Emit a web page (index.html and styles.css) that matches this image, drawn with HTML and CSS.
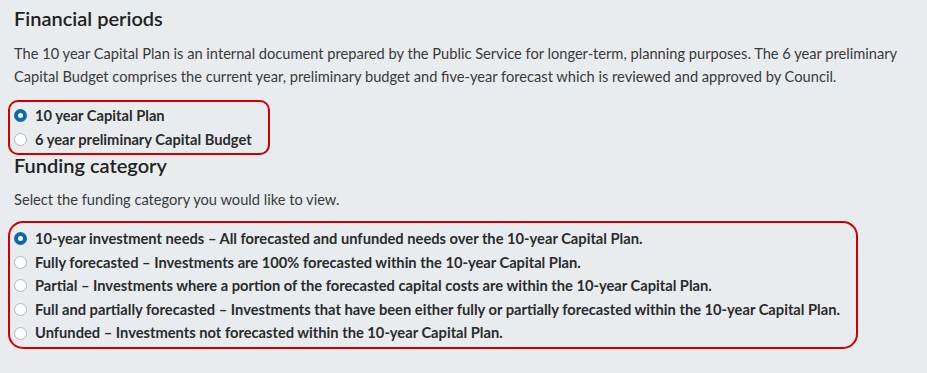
FILE: index.html
```html
<!DOCTYPE html>
<html lang="en">
<head>
<meta charset="utf-8">
<link rel="stylesheet" href="styles.css">
</head>
<body>
<main class="page">
  <section class="group">
    <h2 class="title">Financial periods</h2>
    <p class="desc">The 10 year Capital Plan is an internal document prepared by the Public Service for longer-term, planning purposes. The 6 year preliminary Capital Budget comprises the current year, preliminary budget and five-year forecast which is reviewed and approved by Council.</p>
    <div class="box box-small">
      <label class="opt"><span class="radio checked"></span>10 year Capital Plan</label>
      <label class="opt"><span class="radio"></span>6 year preliminary Capital Budget</label>
    </div>
  </section>
  <section class="group">
    <h2 class="title title-2">Funding category</h2>
    <p class="desc desc-2">Select the funding category you would like to view.</p>
    <div class="box box-large">
      <label class="opt"><span class="radio checked"></span>10-year investment needs – All forecasted and unfunded needs over the 10-year Capital Plan.</label>
      <label class="opt"><span class="radio"></span>Fully forecasted – Investments are 100% forecasted within the 10-year Capital Plan.</label>
      <label class="opt"><span class="radio"></span>Partial – Investments where a portion of the forecasted capital costs are within the 10-year Capital Plan.</label>
      <label class="opt"><span class="radio"></span>Full and partially forecasted – Investments that have been either fully or partially forecasted within the 10-year Capital Plan.</label>
      <label class="opt"><span class="radio"></span>Unfunded – Investments not forecasted within the 10-year Capital Plan.</label>
    </div>
  </section>
</main>
</body>
</html>
```
FILE: styles.css
```css
html, body {
  margin: 0;
  padding: 0;
  background: #e9ecef;
  width: 927px;
  height: 373px;
  overflow: hidden;
}
body {
  font-family: Lato, "Open Sans", sans-serif;
  color: #333;
}
.page {
  padding: 5px 0 0 8px;
  width: 900px;
}
.title {
  margin: 0 0 0 6px;
  font-size: 20px;
  font-weight: 600;
  color: #222;
  line-height: 26px;
}
.title-2 {
  margin-top: -3px;
}
.desc {
  margin: 11px 0 12px 6px;
  font-size: 14.65px;
  line-height: 23px;
  color: #3a3a3a;
}
.desc-2 {
  margin-top: 10px;
  margin-bottom: 10px;
}
.box {
  border: 2px solid #c00;
  border-radius: 10px;
  display: flex;
  flex-direction: column;
  padding: 2px 0 1px 4px;
  box-sizing: border-box;
}
.box-small {
  width: 262px;
  height: 55px;
}
.box-large {
  width: 850px;
  height: 128px;
  border-radius: 15px;
  padding-top: 4px;
}
.opt {
  display: flex;
  align-items: center;
  font-size: 14.7px;
  font-weight: 700;
  line-height: 23.6px;
  color: #2b2b2b;
}
.radio {
  width: 11px;
  height: 11px;
  border: 1px solid #b5b5b5;
  border-radius: 50%;
  background: #fff;
  margin-right: 8px;
  flex: none;
  box-sizing: content-box;
}
.radio.checked {
  border: 4px solid #0a6ba8;
  width: 5px;
  height: 5px;
}
```
